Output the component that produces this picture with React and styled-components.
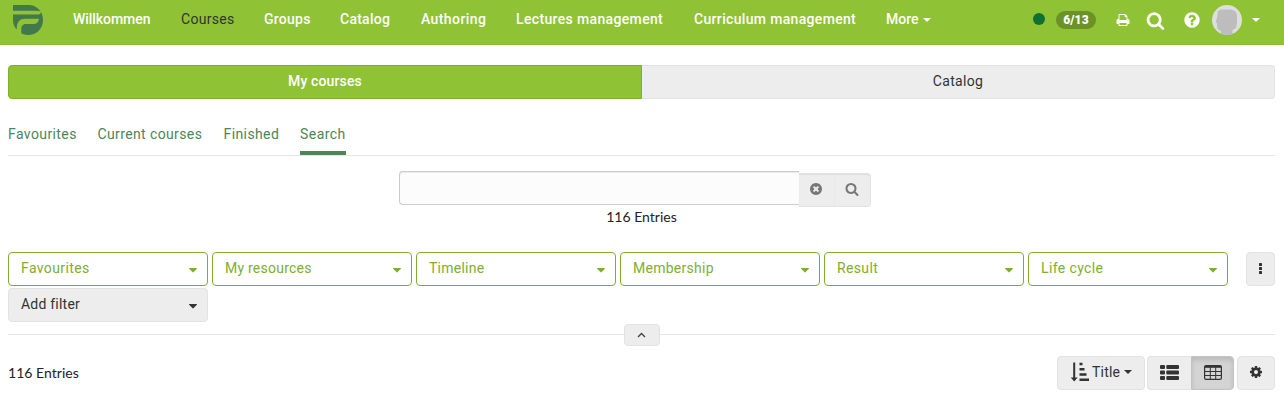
import React from "react";
import styled, { createGlobalStyle } from "styled-components";

const Global = createGlobalStyle`
  * { box-sizing: border-box; }
  body { margin: 0; background: #fff; color: #333; font: 14px/20px Roboto, "Liberation Sans", sans-serif; }
  button { font: inherit; color: inherit; cursor: pointer; }
`;

const paths = {
  search: "M1216 832q0-185-131.5-316.5t-316.5-131.5-316.5 131.5-131.5 316.5 131.5 316.5 316.5 131.5 316.5-131.5 131.5-316.5zm512 832q0 52-38 90t-90 38q-54 0-90-38l-343-342q-179 124-399 124-143 0-273.5-55.5t-225-150-150-225-55.5-273.5 55.5-273.5 150-225 225-150 273.5-55.5 273.5 55.5 225 150 150 225 55.5 273.5q0 220-124 399l343 343q37 37 37 90z",
  print: "M448 1536h896v-256h-896v256zm0-640h896v-384h-160q-40 0-68-28t-28-68v-160h-640v640zm1152 64q0-26-19-45t-45-19-45 19-19 45 19 45 45 19 45-19 19-45zm128 0v416q0 13-9.5 22.5t-22.5 9.5h-224v160q0 40-28 68t-68 28h-960q-40 0-68-28t-28-68v-160h-224q-13 0-22.5-9.5t-9.5-22.5v-416q0-79 56.5-135.5t135.5-56.5h64v-544q0-40 28-68t68-28h672q40 0 88 20t76 48l152 152q28 28 48 76t20 88v256h64q79 0 135.5 56.5t56.5 135.5z",
  clear: "M1277 1122q0-26-19-45l-181-181 181-181q19-19 19-45 0-27-19-46l-90-90q-19-19-46-19-26 0-45 19l-181 181-181-181q-19-19-45-19-27 0-46 19l-90 90q-19 19-19 46 0 26 19 45l181 181-181 181q-19 19-19 45 0 27 19 46l90 90q19 19 46 19 26 0 45-19l181-181 181 181q19 19 45 19 27 0 46-19l90-90q19-19 19-46zm387-226q0 209-103 385.5t-279.5 279.5-385.5 103-385.5-103-279.5-279.5-103-385.5 103-385.5 279.5-279.5 385.5-103 385.5 103 279.5 279.5 103 385.5z",
  help: "M1024 1376v-192q0-14-9-23t-23-9h-192q-14 0-23 9t-9 23v192q0 14 9 23t23 9h192q14 0 23-9t9-23zm256-672q0-88-55.5-163t-138.5-116-170-41q-243 0-371 213-15 24 8 42l132 100q7 6 19 6 16 0 25-12 53-68 86-92 34-24 86-24 48 0 85.5 26t37.5 59q0 38-20 61t-68 45q-63 28-115.5 86.5t-52.5 125.5v36q0 14 9 23t23 9h192q14 0 23-9t9-23q0-19 21.5-49.5t54.5-49.5q32-18 49-28.5t46-35 44.5-48 28-60.5 12.5-81zm384 192q0 209-103 385.5t-279.5 279.5-385.5 103-385.5-103-279.5-279.5-103-385.5 103-385.5 279.5-279.5 385.5-103 385.5 103 279.5 279.5 103 385.5z",
  caret: "M1408 704q0 26-19 45l-448 448q-19 19-45 19t-45-19l-448-448q-19-19-19-45t19-45 45-19h896q26 0 45 19t19 45z",
  cog: "M1152 896q0-106-75-181t-181-75-181 75-75 181 75 181 181 75 181-75 75-181zm512-109v222q0 12-8 23t-20 13l-185 28q-19 54-39 91 35 50 107 138 10 12 10 25t-9 23q-27 37-99 108t-94 71q-12 0-26-9l-138-108q-44 23-91 38-16 136-29 186-7 28-36 28h-222q-14 0-24.5-8.5t-11.5-21.5l-28-184q-49-16-90-37l-141 107q-10 9-25 9-14 0-25-11-126-114-165-168-7-10-7-23 0-12 8-23 15-21 51-66.5t54-70.5q-27-50-41-99l-183-27q-13-2-21-12.5t-8-23.5v-222q0-12 8-23t19-13l186-28q14-46 39-92-40-57-107-138-10-12-10-24 0-10 9-23 26-36 98.5-107.5t94.5-71.5q13 0 26 10l138 107q44-23 91-38 16-136 29-186 7-28 36-28h222q14 0 24.5 8.5t11.5 21.5l28 184q49 16 90 37l142-107q9-9 24-9 13 0 25 10 129 119 165 170 7 8 7 22 0 12-8 23-15 21-51 66.5t-54 70.5q26 50 41 98l183 28q13 2 21 12.5t8 23.5z",
};

const Svg = styled.svg`display: block; flex: none; fill: currentColor;`;
const Icon = ({ name, size = 14 }) => (
  <Svg width={size} height={size} viewBox="0 0 1792 1792"><path d={paths[name]} /></Svg>
);

const Navbar = styled.header`
  display: flex; align-items: flex-start; height: 45px; padding: 5px 24px 0 13px;
  background: #8fc234; border-bottom: 1px solid #8abb32; color: #fff;
`;
const Brand = styled.a`width: 60px; flex: none;`;
const Nav = styled.nav`display: flex; padding-top: 4px;`;
const NavItem = styled.a`
  flex: none; width: ${p => p.$w}px; letter-spacing: ${p => p.$ls || 0}px; white-space: nowrap;
  font-weight: ${p => (p.$active ? 400 : 500)}; color: ${p => (p.$active ? "#333" : "#fff")};
`;
const Caret = styled.span`
  display: inline-block; border: 4px solid transparent; border-top-color: currentColor;
  border-bottom: 0; vertical-align: middle; margin-left: ${p => p.$gap || 0}px;
`;
const Tools = styled.div`display: flex; align-items: center; margin-left: auto; height: 30px;`;
const Status = styled.span`width: 12px; height: 12px; border-radius: 50%; background: #0f7033; margin: 0 11px 2px 0;`;
const Badge = styled.span`
  width: 40px; height: 18px; border-radius: 9px; background: #6b9127; text-align: center;
  font: 900 12px/18px Roboto, sans-serif; letter-spacing: 0.1px; margin-right: 20px;
`;
const Tool = styled.a`display: flex; margin-right: ${p => p.$after}px;`;

const Main = styled.main`padding: 20px 9px 0 8px;`;
const Segments = styled.div`display: flex; height: 34px;`;
const Segment = styled.button`
  flex: 1 1 0; padding: 0 0 2px; border: 1px solid ${p => (p.$active ? "#80ae2e" : "#e2e2e2")};
  background: ${p => (p.$active ? "#8fc234" : "#ededed")}; color: ${p => (p.$active ? "#fff" : "#333")};
  border-radius: ${p => (p.$active ? "4px 0 0 4px" : "0 4px 4px 0")};
  border-left-width: ${p => (p.$active ? 1 : 0)}px;
  font-weight: ${p => (p.$active ? 500 : 400)}; letter-spacing: ${p => p.$ls}px; line-height: 20px;
`;
const Tabs = styled.nav`display: flex; height: 57px; padding-top: 25px; border-bottom: 1px solid #e5e5e5;`;
const Tab = styled.a`
  width: ${p => p.$w}px; margin-right: 21px; height: 31px; color: #4c8658; letter-spacing: ${p => p.$ls || 0}px; white-space: nowrap;
  border-bottom: 4px solid ${p => (p.$active ? "#4c8658" : "transparent")};
`;
const SearchRow = styled.div`display: flex; justify-content: center; align-items: flex-start; padding: 15px 13px 0 0;`;
const SearchInput = styled.input`
  width: 400px; height: 34px; padding: 6px 12px; border: 1px solid #ccc; border-right-width: 0; outline: 0; border-radius: 4px 0 0 4px;
  background: #fcfcfc; box-shadow: inset 0 1px 1px rgba(0,0,0,.075); font: inherit;
`;
const SearchButtons = styled.div`
  display: flex; width: 72px; height: 34px; margin-top: 2px; background: #ededed; border: 1px solid #e2e2e2;
  border-left: 0; border-radius: 0 4px 4px 0; box-shadow: inset 0 1px 1px rgba(0,0,0,.06); color: #777;
`;
const SearchButton = styled.button`
  display: flex; justify-content: center; align-items: center; width: ${p => p.$w}px; padding: 0 1px 2px 0; border: 0; background: none;
  & + & { border-left: 1px solid #e9e9e9; padding-right: 2px; }
`;
const Count = styled.div`
  font: 14px/20px Lato, sans-serif; color: #222; padding-top: ${p => p.$top || 0}px; letter-spacing: ${p => (p.$center ? 0 : 0.03)}px;
  text-align: ${p => (p.$center ? "center" : "left")};
`;
const Filters = styled.div`display: flex; justify-content: space-between; align-items: flex-start; margin-top: 25px;`;
const FilterList = styled.div`display: flex; flex-wrap: wrap; gap: 2px 4px; width: 1228px;`;
const Filter = styled.button`
  display: flex; justify-content: space-between; align-items: center; width: 200px; height: 34px; padding: 0 7px 2px 12px;
  border: 1px solid ${p => (p.$add ? "#e2e2e2" : "#80ae2e")}; border-radius: 4px;
  background: ${p => (p.$add ? "#ededed" : "#fff")}; color: ${p => (p.$add ? "#333" : "#80ae2e")};
  letter-spacing: ${p => p.$ls || 0}px;
  svg { margin-top: 3px; }
`;
const IconButton = styled.button`
  display: flex; align-items: center; justify-content: center; width: ${p => p.$w}px; height: 34px; padding: 0 0 2px;
  background: #ededed; border: 1px solid #e2e2e2; border-radius: 4px;
`;
const Divider = styled.div`
  display: flex; justify-content: center; align-items: center; height: 22px; margin-top: 2px;
  &::before, &::after { content: ""; height: 1px; background: #e5e5e5; flex: 1; margin-bottom: 1px; }
`;
const Collapse = styled.button`
  width: 36px; height: 22px; padding: 0; display: flex; align-items: center; justify-content: center;
  background: #ededed; border: 1px solid #e2e2e2; border-radius: 4px;
`;
const Footer = styled.div`display: flex; justify-content: space-between; padding-top: 10px;`;
const Actions = styled.div`display: flex; gap: 2px;`;
const SortButton = styled(IconButton)`justify-content: flex-start; padding-left: 12px;`;
const SortLabel = styled.span`margin-left: 3px; letter-spacing: 0.2px;`;
const Views = styled.div`display: flex; margin-right: 1px;`;
const ViewButton = styled(IconButton)`
  border-radius: ${p => (p.$active ? "0 4px 4px 0" : "4px 0 0 4px")}; border-right-width: ${p => (p.$active ? 1 : 0)}px;
  ${p => p.$active && "background: #d4d4d4; border-color: #c3c3c3; box-shadow: inset 0 3px 5px rgba(0,0,0,.125);"}
`;

const Logo = () => (
  <Svg width="30" height="30" viewBox="0 0 30 30">
    <path fill="#41794a" d="M0 0H16C21 0 25 3 27.5 6.3L24 5.7H0Z" />
    <path fill="#41794a" d="M0 9.6H24.5C27 9.6 28 8.5 27.8 7C29.3 9 30 12 30 15C30 24 23 30 15 30C12.4 30 10.4 29.5 8.3 28.3V24.2C8.3 20.5 10.2 19 13 19H20.5C23.7 19 25.6 17 26 13.7H12C7 13.7 4 17 3.8 22V24.5C1.2 22 0 19 0 15Z" />
  </Svg>
);
const Avatar = () => (
  <Svg width="30" height="30" viewBox="0 0 30 30">
    <circle cx="15" cy="15" r="15" fill="#dedede" />
    <path fill="#bdbdbd" d="M6 6L9 4.5H19L22 5.5L24 7L25 10V18L24 23L20.5 25V29Q15 31 9 28.7V26L6 24.5L5 21V18L3.5 17.5L5 13Z" />
  </Svg>
);

const filters = [["Favourites", 0.38], ["My resources", 0.23], ["Timeline", 0.25], ["Membership", 0.27], ["Result", 0.35], ["Life cycle", 0.38]];

export default function App() {
  return (
    <>
      <Global />
      <Navbar>
        <Brand><Logo /></Brand>
        <Nav>
          <NavItem $w={108} $ls={-0.05}>Willkommen</NavItem>
          <NavItem $w={83} $active $ls={0.3}>Courses</NavItem>
          <NavItem $w={76} $ls={0.25}>Groups</NavItem>
          <NavItem $w={81} $ls={0.25}>Catalog</NavItem>
          <NavItem $w={95} $ls={0.4}>Authoring</NavItem>
          <NavItem $w={178} $ls={0.35}>Lectures management</NavItem>
          <NavItem $w={192} $ls={0.33}>Curriculum management</NavItem>
          <NavItem $w={50}>More<Caret $gap={4.5} /></NavItem>
        </Nav>
        <Tools>
          <Status />
          <Badge>6/13</Badge>
          <Tool $after={16}><Icon name="print" size={14} /></Tool>
          <Tool $after={18}><Icon name="search" size={19} /></Tool>
          <Tool $after={11}><Icon name="help" size={18} /></Tool>
          <Tool $after={10}><Avatar /></Tool>
          <Caret />
        </Tools>
      </Navbar>
      <Main>
        <Segments>
          <Segment $active $ls={0.13}>My courses</Segment>
          <Segment $ls={0.3}>Catalog</Segment>
        </Segments>
        <Tabs>
          <Tab $w={68.5} $ls={0.4}>Favourites</Tab>
          <Tab $w={105} $ls={0.38}>Current courses</Tab>
          <Tab $w={55.5} $ls={0.4}>Finished</Tab>
          <Tab $w={46} $ls={0.45} $active>Search</Tab>
        </Tabs>
        <SearchRow>
          <SearchInput aria-label="Search" />
          <SearchButtons>
            <SearchButton $w={35}><Icon name="clear" /></SearchButton>
            <SearchButton $w={36}><Icon name="search" /></SearchButton>
          </SearchButtons>
        </SearchRow>
        <Count $center>116 Entries</Count>
        <Filters>
          <FilterList>
            {filters.map(([label, ls]) => <Filter key={label} $ls={ls}>{label}<Icon name="caret" /></Filter>)}
            <Filter $add $ls={0.22}>Add filter<Icon name="caret" /></Filter>
          </FilterList>
          <IconButton $w={29}>
            <Svg width="3" height="11" viewBox="0 0 3 11"><rect width="3" height="3" rx=".5" /><rect y="4" width="3" height="3" rx=".5" /><rect y="8" width="3" height="3" rx=".5" /></Svg>
          </IconButton>
        </Filters>
        <Divider>
          <Collapse><Svg width="9" height="6" viewBox="0 0 9 6"><path d="M1 5L4.5 1.5L8 5" fill="none" stroke="#444" strokeWidth="1.4" /></Svg></Collapse>
        </Divider>
        <Footer>
          <Count $top={7}>116 Entries</Count>
          <Actions>
            <SortButton $w={88}>
              <Svg width="19" height="20" viewBox="0 0 19 20"><path d="M3.2 .5h2v15h2.5L4.2 19.5.7 15.5H3.2zM9.5 .8h3v2.5h-3zM9.5 6h5v2.5h-5zM9.5 11.2h7v2.5h-7zM9.5 16.5H19V19H9.5z" /></Svg>
              <SortLabel>Title</SortLabel><Caret $gap={4} />
            </SortButton>
            <Views>
              <ViewButton $w={44}>
                <Svg width="19" height="15" viewBox="0 0 19 15">{[0, 5.5, 11].map(y => <g key={y}><rect y={y} width="5" height="4" rx="1" /><rect x="6.3" y={y} width="12.7" height="4" rx="1" /></g>)}</Svg>
              </ViewButton>
              <ViewButton $w={43} $active>
                <Svg width="18" height="15" viewBox="0 0 18 15"><rect x=".6" y=".6" width="16.8" height="13.8" rx="1.4" fill="none" stroke="#333" strokeWidth="1.2" /><path d="M1 1h16v1.8H1z" /><path d="M6.3 2v12M11.7 2v12M1 6.5h16M1 10.5h16" stroke="#333" strokeWidth="1" /></Svg>
              </ViewButton>
            </Views>
            <IconButton $w={38}><Icon name="cog" /></IconButton>
          </Actions>
        </Footer>
      </Main>
    </>
  );
}
